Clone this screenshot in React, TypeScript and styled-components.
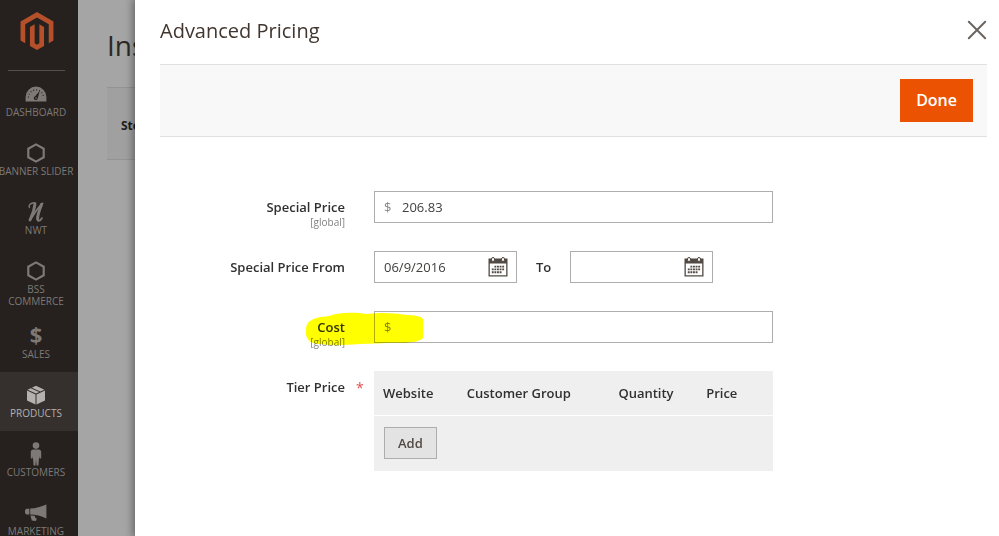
import React from "react";
import styled, { createGlobalStyle } from "styled-components";

const GlobalStyle = createGlobalStyle`
  *, *::before, *::after { box-sizing: border-box; }
  html, body { margin: 0; height: 100%; overflow: hidden; }
  body {
    background: #a5a5a5;
    color: #303030;
    font-family: "Open Sans", "Noto Sans", sans-serif;
    font-size: 13px;
    line-height: 16px;
  }
  button, input { font: inherit; color: inherit; margin: 0; }
`;

const Shell = styled.div`
  display: flex;
  height: 100vh;
  overflow: hidden;
`;

const Sidebar = styled.nav`
  flex: 0 0 78px;
  background: #26211e;
  overflow: hidden;
`;

const LogoLink = styled.a`
  display: flex;
  justify-content: center;
  height: 71px;
  margin: 0 13px 0 8px;
  padding-top: 12px;
  border-bottom: 1px solid #55504c;
  color: #b6502a;
`;

const NavItem = styled.a<{ $active?: boolean }>`
  display: flex;
  flex-direction: column;
  align-items: center;
  gap: 1px;
  min-height: 59px;
  padding: 12px 6px 6px 0;
  background: ${(p) => (p.$active ? "#35302d" : "transparent")};
  color: ${(p) => (p.$active ? "#b4b1ae" : "#7d7976")};
  font-size: 10px;
  line-height: 12px;
  text-align: center;
  text-decoration: none;
  text-transform: uppercase;
`;

const NavIcon = styled.span`
  display: flex;
  align-items: center;
  justify-content: center;
  height: 22px;
`;

const NavLabel = styled.span<{ $wrap?: boolean }>`
  white-space: ${(p) => (p.$wrap ? "normal" : "nowrap")};
`;

const DollarMark = styled.span`
  align-self: flex-start;
  font-size: 22px;
  font-weight: 700;
  line-height: 18px;
`;

const Page = styled.main`
  flex: 1;
  padding: 25px 0 0 29px;
`;

const PageTitle = styled.h1`
  margin: 0 0 22px;
  color: #2c2825;
  font-size: 28px;
  font-weight: 400;
  line-height: 40px;
`;

const StoreBar = styled.div`
  display: flex;
  align-items: center;
  height: 73px;
  padding: 4px 14px 0;
  background: #a0a0a0;
  border-top: 1px solid #939393;
  border-bottom: 1px solid #939393;
  color: #201d1b;
  font-size: 12px;
  font-weight: 700;
`;

const Overlay = styled.div`
  position: fixed;
  inset: 0;
  display: flex;
  padding-left: 135px;
`;

const Modal = styled.section`
  flex: 1;
  min-width: 0;
  padding: 0 12px 0 25px;
  background: #fff;
  box-shadow: 0 0 8px 2px rgba(0, 0, 0, 0.4);
  overflow: hidden;
`;

const ModalHeader = styled.header`
  display: flex;
  align-items: center;
  justify-content: space-between;
  height: 64px;
  padding-bottom: 2px;
`;

const ModalTitle = styled.h2`
  margin: 0;
  color: #41362f;
  font-size: 20px;
  font-weight: 400;
  line-height: 28px;
`;

const CloseButton = styled.button`
  display: flex;
  margin-bottom: 2px;
  padding: 0;
  border: 0;
  background: none;
  color: #6b6560;
`;

const ActionBar = styled.div`
  display: flex;
  align-items: center;
  justify-content: flex-end;
  height: 73px;
  padding: 0 14px;
  background: #f8f8f8;
  border-top: 1px solid #e0e0e0;
  border-bottom: 1px solid #e0e0e0;
`;

const DoneButton = styled.button`
  height: 43px;
  padding: 0 16px 2px;
  border: 0;
  background: #eb5202;
  color: #fff;
  font-size: 16px;
  font-weight: 600;
`;

const Form = styled.form`
  display: grid;
  grid-auto-rows: minmax(60px, auto);
  padding-top: 54px;
`;

const Field = styled.div`
  position: relative;
  display: grid;
  grid-template-columns: 185fr 29px 399fr 214fr;
  align-items: start;
`;

const LabelCell = styled.div`
  display: flex;
  flex-direction: column;
  align-items: flex-end;
  padding-top: 8px;
  font-weight: 600;
`;

const Scope = styled.span`
  color: #808080;
  font-size: 10px;
  font-weight: 400;
  line-height: 14px;
`;

const Required = styled.span`
  padding: 9px 0 0 11px;
  color: #e25050;
  font-size: 14px;
`;

const Control = styled.div`
  grid-column: 3;
  min-width: 0;
`;

const InputBox = styled.div`
  display: flex;
  align-items: center;
  height: 32px;
  padding: 0 9px;
  border: 1px solid #adadad;
  color: #41403f;
`;

const DateBox = styled(InputBox)`
  flex: 0 1 143px;
  min-width: 0;
  padding-right: 8px;
`;

const Currency = styled.span`
  flex: 0 0 18px;
  color: #858585;
`;

const TextInput = styled.input`
  flex: 1;
  width: 0;
  min-width: 0;
  height: 30px;
  padding: 0;
  border: 0;
  outline: 0;
  background: transparent;
`;

const IconButton = styled.button`
  display: flex;
  padding: 0;
  border: 0;
  background: none;
  color: #514943;
`;

const DateRange = styled.div`
  display: flex;
  align-items: center;
  gap: 19px;
`;

const ToLabel = styled.label`
  font-weight: 600;
`;

const Marker = styled.svg`
  position: absolute;
  top: 0;
  right: calc(100% - 263px);
  pointer-events: none;
  mix-blend-mode: multiply;
`;

const TierTable = styled.table`
  width: 100%;
  table-layout: fixed;
  border-collapse: collapse;
  background: #efefef;
`;

const HeadCell = styled.th<{ $share: number }>`
  width: ${(p) => p.$share}%;
  height: 44px;
  padding: 0 0 0 9px;
  border-bottom: 1px solid #fff;
  font-weight: 600;
  text-align: left;
  white-space: nowrap;
`;

const FootCell = styled.td`
  height: 56px;
  padding: 0 10px;
`;

const AddButton = styled.button`
  display: block;
  height: 32px;
  padding: 0 13px;
  border: 1px solid #adadad;
  background: #e3e3e3;
  color: #514943;
  font-weight: 600;
`;

const HexagonIcon = () => (
  <svg width="18" height="20" viewBox="0 0 18 20" fill="none" stroke="currentColor" strokeWidth="2.2" aria-hidden="true">
    <path d="M9 1.4 16.7 5.7v8.6L9 18.6 1.3 14.3V5.7z" />
  </svg>
);

const GaugeIcon = () => (
  <svg width="22" height="16" viewBox="0 0 22 16" aria-hidden="true">
    <path fill="currentColor" d="M.6 15.5V11a10.4 10.4 0 0 1 20.8 0v4.5z" />
    <path
      fill="none"
      stroke="#26211e"
      strokeWidth="1.1"
      strokeDasharray="1 2"
      d="M3.4 11.5a7.6 7.6 0 0 1 15.2 0"
    />
    <path fill="#26211e" d="m14.8 4.8-2 7.2a2 2 0 1 1-2.6-1.8z" />
    <circle cx="11" cy="12" r="0.8" fill="currentColor" />
  </svg>
);

const ScriptIcon = () => (
  <svg width="18" height="22" viewBox="0 0 18 22" fill="none" stroke="currentColor" strokeLinecap="round" strokeLinejoin="round" aria-hidden="true">
    <path strokeWidth="1.4" d="M2.4 6.4C1.4 4.2 3.4 2 7.4 1.8" />
    <path strokeWidth="2.8" d="M8 2.6C7.4 8 5.4 14 3 19" />
    <path strokeWidth="1.8" d="M3 19C7.4 13 11 6 15.6 2.4" />
    <path strokeWidth="3" d="M14.6 3.4C12.8 8 10.4 14 10.6 18" />
    <path strokeWidth="1.6" d="M10.4 18.6c.2 2.2 3 1.4 4.6-1.6" />
  </svg>
);

const BoxIcon = () => (
  <svg width="18" height="20" viewBox="0 0 18 20" fill="currentColor" aria-hidden="true">
    <path d="M0 5.6 8.5 9.4v10L0 15.4zM9.5 9.4 18 5.6v9.8l-8.5 4z" />
    <path d="M.6 4.7 3.7 3.2l8.4 3.9L9 8.5zM4.9 2.7 9 .8l8.4 3.9-4.1 1.9z" />
  </svg>
);

const PersonIcon = () => (
  <svg width="12" height="24" viewBox="0 0 12 24" fill="currentColor" aria-hidden="true">
    <circle cx="6" cy="3.6" r="3.3" />
    <path d="M3.4 7.6h5.2c1.8 0 2.6 1.2 2.6 3v4.8c0 1.6-1.7 1.6-1.9 0L9.2 14 8.4 23.4H6.5L6 17.4l-.5 6H3.6L2.8 14l-.1 1.4c-.2 1.6-1.9 1.6-1.9 0v-4.8c0-1.8.8-3 2.6-3z" />
  </svg>
);

const MegaphoneIcon = () => (
  <svg width="22" height="18" viewBox="0 0 22 18" fill="currentColor" aria-hidden="true">
    <path d="M1.2 4.8h3.2v5.6H1.2L0 9V6.2zM5.2 4.6C11 4.4 16 3 21.4.6v14C16 12 11 10.8 5.2 10.6z" />
    <path d="m5.4 11.4 4.4.4.6 2.2 1.4.6-.8 2.4-4.2-.4z" />
  </svg>
);

const MagentoLogo = () => (
  <svg width="38" height="38" viewBox="0 0 24 24" fill="currentColor" aria-hidden="true">
    <path d="M12 24l-4.455-2.572v-12l2.97-1.715v12.001l1.485.902 1.485-.902V7.713l2.971 1.715v12L12 24zM22.391 6v12l-2.969 1.714V7.713L12 3.43 4.574 7.713v12.001L1.609 18V6L12 0l10.391 6z" />
  </svg>
);

const CalendarIcon = () => (
  <svg width="20" height="20" viewBox="0 0 20 20" aria-hidden="true">
    <path fill="currentColor" fillRule="evenodd" d="M.5 1.5h19v18H.5zM1.8 6.4v11.8h16.4V6.4z" />
    <g fill="#fff" stroke="currentColor" strokeWidth="1">
      <rect x="3.5" y="0.5" width="3" height="4" rx="1.5" />
      <rect x="13.5" y="0.5" width="3" height="4" rx="1.5" />
    </g>
    <path
      stroke="currentColor"
      strokeWidth="1.9"
      strokeDasharray="1.9 0.7"
      d="M6.4 9.6h10M3.8 12.4h12.6M3.8 15.2h10"
    />
  </svg>
);

const CloseIcon = () => (
  <svg width="20" height="20" viewBox="0 0 20 20" fill="none" stroke="currentColor" strokeWidth="2" strokeLinecap="round" aria-hidden="true">
    <path d="m1.8 1.8 16.4 16.4m0-16.4L1.8 18.2" />
  </svg>
);

const navItems: { label: string; icon: React.ReactNode; active?: boolean; wrap?: boolean }[] = [
  { label: "Dashboard", icon: <GaugeIcon /> },
  { label: "Banner Slider", icon: <HexagonIcon /> },
  { label: "NWT", icon: <ScriptIcon /> },
  { label: "BSS Commerce", icon: <HexagonIcon />, wrap: true },
  { label: "Sales", icon: <DollarMark aria-hidden="true">$</DollarMark> },
  { label: "Products", icon: <BoxIcon />, active: true },
  { label: "Customers", icon: <PersonIcon /> },
  { label: "Marketing", icon: <MegaphoneIcon /> },
];

const tierColumns = [
  { name: "Website", share: 21 },
  { name: "Customer Group", share: 38 },
  { name: "Quantity", share: 22 },
  { name: "Price", share: 19 },
];

export default function App() {
  return (
    <>
      <GlobalStyle />
      <Shell>
        <Sidebar>
          <LogoLink href="#" aria-label="Magento">
            <MagentoLogo />
          </LogoLink>
          {navItems.map((item) => (
            <NavItem key={item.label} href="#" $active={item.active}>
              <NavIcon>{item.icon}</NavIcon>
              <NavLabel $wrap={item.wrap}>{item.label}</NavLabel>
            </NavItem>
          ))}
        </Sidebar>
        <Page>
          <PageTitle>Ins</PageTitle>
          <StoreBar>Sto</StoreBar>
        </Page>
      </Shell>
      <Overlay>
        <Modal role="dialog" aria-labelledby="modal-title">
          <ModalHeader>
            <ModalTitle id="modal-title">Advanced Pricing</ModalTitle>
            <CloseButton type="button" aria-label="Close">
              <CloseIcon />
            </CloseButton>
          </ModalHeader>
          <ActionBar>
            <DoneButton type="button">Done</DoneButton>
          </ActionBar>
          <Form>
            <Field>
              <LabelCell>
                <label htmlFor="special-price">Special Price</label>
                <Scope>[global]</Scope>
              </LabelCell>
              <Control>
                <InputBox>
                  <Currency>$</Currency>
                  <TextInput id="special-price" defaultValue="206.83" />
                </InputBox>
              </Control>
            </Field>
            <Field>
              <LabelCell>
                <label htmlFor="price-from">Special Price From</label>
              </LabelCell>
              <Control>
                <DateRange>
                  <DateBox>
                    <TextInput id="price-from" defaultValue="06/9/2016" />
                    <IconButton type="button" aria-label="Choose start date">
                      <CalendarIcon />
                    </IconButton>
                  </DateBox>
                  <ToLabel htmlFor="price-to">To</ToLabel>
                  <DateBox>
                    <TextInput id="price-to" />
                    <IconButton type="button" aria-label="Choose end date">
                      <CalendarIcon />
                    </IconButton>
                  </DateBox>
                </DateRange>
              </Control>
            </Field>
            <Field>
              <LabelCell>
                <label htmlFor="cost">Cost</label>
                <Scope>[global]</Scope>
              </LabelCell>
              <Control>
                <InputBox>
                  <Currency>$</Currency>
                  <TextInput id="cost" />
                </InputBox>
              </Control>
              <Marker width="118" height="36" viewBox="0 0 118 36" aria-hidden="true">
                <path
                  fill="#ffff00"
                  d="M3 12C7 7 15 6 24 5 34 1 50 1 62 3c14-2 28-1 40 1 6 0 14 1 16 4v19c-3 4-12 4-19 5-15-1-30 1-45 1-13 1-28 2-38 0C6 34 0 28 1 20c0-3 0-6 2-8z"
                />
              </Marker>
            </Field>
            <Field>
              <LabelCell>
                <span id="tier-label">Tier Price</span>
              </LabelCell>
              <Required aria-label="required">*</Required>
              <Control>
                <TierTable aria-labelledby="tier-label">
                  <thead>
                    <tr>
                      {tierColumns.map((c) => (
                        <HeadCell key={c.name} scope="col" $share={c.share}>
                          {c.name}
                        </HeadCell>
                      ))}
                    </tr>
                  </thead>
                  <tfoot>
                    <tr>
                      <FootCell colSpan={4}>
                        <AddButton type="button">Add</AddButton>
                      </FootCell>
                    </tr>
                  </tfoot>
                </TierTable>
              </Control>
            </Field>
          </Form>
        </Modal>
      </Overlay>
    </>
  );
}
